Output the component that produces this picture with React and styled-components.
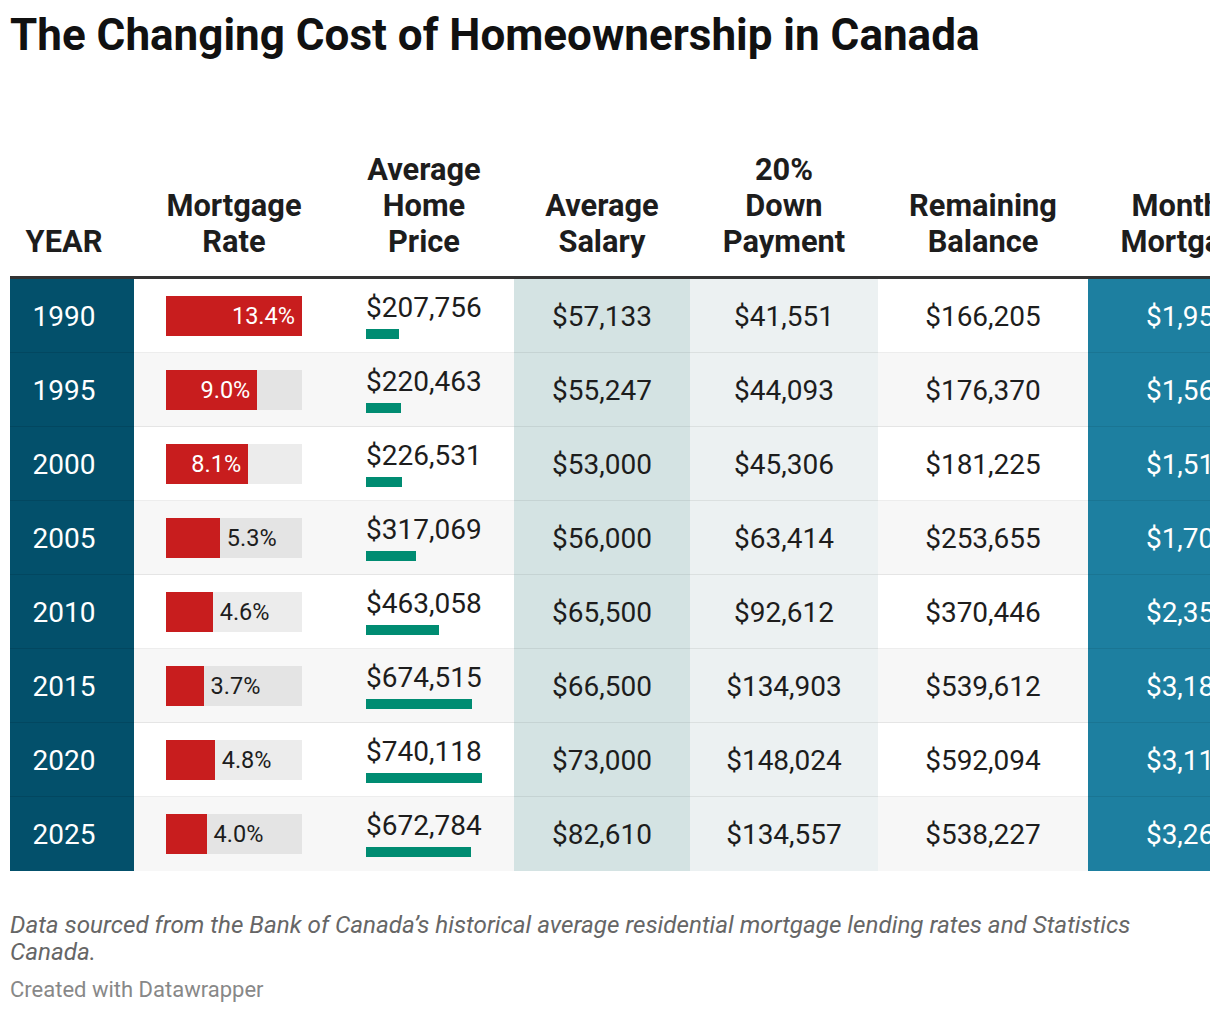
import React from "react"
import styled, { createGlobalStyle } from "styled-components"

const GlobalStyle = createGlobalStyle`
  html, body {
    margin: 0;
    padding: 0;
    background: #fff;
    overflow: hidden;
  }
  body {
    font-family: Roboto, "Liberation Sans", sans-serif;
    color: #1d1d1d;
  }
`

const MAX_RATE = 13.4
const MAX_PRICE = 740118

const rows = [
  { year: 1990, rate: 13.4, price: 207756, salary: "$57,133", down: "$41,551", balance: "$166,205", monthly: "$1,957" },
  { year: 1995, rate: 9.0, price: 220463, salary: "$55,247", down: "$44,093", balance: "$176,370", monthly: "$1,568" },
  { year: 2000, rate: 8.1, price: 226531, salary: "$53,000", down: "$45,306", balance: "$181,225", monthly: "$1,513" },
  { year: 2005, rate: 5.3, price: 317069, salary: "$56,000", down: "$63,414", balance: "$253,655", monthly: "$1,704" },
  { year: 2010, rate: 4.6, price: 463058, salary: "$65,500", down: "$92,612", balance: "$370,446", monthly: "$2,357" },
  { year: 2015, rate: 3.7, price: 674515, salary: "$66,500", down: "$134,903", balance: "$539,612", monthly: "$3,185" },
  { year: 2020, rate: 4.8, price: 740118, salary: "$73,000", down: "$148,024", balance: "$592,094", monthly: "$3,117" },
  { year: 2025, rate: 4.0, price: 672784, salary: "$82,610", down: "$134,557", balance: "$538,227", monthly: "$3,262" },
]

const columns = [
  { key: "year", label: ["YEAR"], width: 124, pad: 16 },
  { key: "rate", label: ["Mortgage", "Rate"], width: 200 },
  { key: "price", label: ["Average", "Home", "Price"], width: 180 },
  { key: "salary", label: ["Average", "Salary"], width: 176 },
  { key: "down", label: ["20%", "Down", "Payment"], width: 188 },
  { key: "balance", label: ["Remaining", "Balance"], width: 210 },
  { key: "monthly", label: ["Monthly", "Mortgage"], width: 200 },
]

const fmt = (n) => "$" + n.toLocaleString("en-US")

export default function App() {
  return (
    <Page>
      <GlobalStyle />
      <Title>The Changing Cost of Homeownership in Canada</Title>
      <TableWrap>
        <Table>
          <colgroup>
            {columns.map((c) => (
              <col key={c.key} style={{ width: c.width }} />
            ))}
          </colgroup>
          <thead>
            <tr>
              {columns.map((c) => (
                <HeadCell key={c.key} $padRight={c.pad}>
                  {c.label.map((l) => (
                    <div key={l}>{l}</div>
                  ))}
                </HeadCell>
              ))}
            </tr>
          </thead>
          <tbody>
            {rows.map((r, i) => {
              const striped = i % 2 === 1
              const rateW = (r.rate / MAX_RATE) * 136
              const inside = rateW > 75
              return (
                <Row key={r.year} $striped={striped}>
                  <YearCell>{r.year}</YearCell>
                  <Cell>
                    <RateTrack>
                      <RateBar style={{ width: rateW }}>
                        {inside && <RateLabel $inside>{r.rate.toFixed(1)}%</RateLabel>}
                      </RateBar>
                      {!inside && <RateLabel>{r.rate.toFixed(1)}%</RateLabel>}
                    </RateTrack>
                  </Cell>
                  <Cell>
                    <PriceBox>
                      <PriceText>{fmt(r.price)}</PriceText>
                      <PriceBar style={{ width: (r.price / MAX_PRICE) * 116 }} />
                    </PriceBox>
                  </Cell>
                  <Cell $bg="#d4e3e3" $line="rgba(0,0,0,0.07)">{r.salary}</Cell>
                  <Cell $bg="#ecf1f2">{r.down}</Cell>
                  <Cell>{r.balance}</Cell>
                  <Cell $bg="#1d7fa0" $color="#fff" $line="rgba(0,0,0,0.08)">{r.monthly}</Cell>
                </Row>
              )
            })}
          </tbody>
        </Table>
      </TableWrap>
      <Notes>
        Data sourced from the Bank of Canada’s historical average residential mortgage lending rates and Statistics Canada.
      </Notes>
      <Credit>Created with Datawrapper</Credit>
    </Page>
  )
}

const Page = styled.div`
  width: 1200px;
  padding: 9px 10px 0;
`

const Title = styled.h1`
  margin: 0;
  font-size: 44px;
  line-height: 53px;
  font-weight: 700;
  color: #111;
`

const TableWrap = styled.div`
  width: 1200px;
  overflow: hidden;
  margin-top: 90px;
`

const Table = styled.table`
  table-layout: fixed;
  border-collapse: collapse;
  width: 1278px;
`

const HeadCell = styled.th`
  vertical-align: bottom;
  text-align: center;
  font-size: 30.8px;
  line-height: 36px;
  font-weight: 700;
  color: #1d1d1d;
  padding: 0 ${(p) => p.$padRight || 0}px 16px 0;
  border-bottom: 3px solid #333;
`

const Row = styled.tr`
  height: 74px;
  background: ${(p) => (p.$striped ? "#f7f7f7" : "#fff")};
`

const Cell = styled.td`
  padding: 2px 0 0;
  text-align: center;
  font-size: 28px;
  height: 71px;
  background: ${(p) => p.$bg || "transparent"};
  color: ${(p) => p.$color || "#1d1d1d"};
  border-bottom: 1px solid ${(p) => p.$line || "rgba(0,0,0,0.07)"};
  tr:last-child & {
    border-bottom: none;
  }
`

const YearCell = styled(Cell)`
  background: #03506b;
  color: #fff;
  padding-right: 16px;
  border-bottom-color: rgba(0, 0, 0, 0.1);
`

const RateTrack = styled.div`
  display: flex;
  align-items: center;
  width: 136px;
  height: 40px;
  margin: -2px 0 0 32px;
  background: rgba(0, 0, 0, 0.075);
`

const RateBar = styled.div`
  height: 100%;
  background: #c81d1e;
  display: flex;
  align-items: center;
  justify-content: flex-end;
`

const RateLabel = styled.span`
  font-size: 23.5px;
  color: ${(p) => (p.$inside ? "#fff" : "#1d1d1d")};
  padding: ${(p) => (p.$inside ? "0 7px 0 0" : "0 0 0 7px")};
`

const PriceBox = styled.div`
  width: 116px;
  margin: -2px auto 0;
  display: flex;
  flex-direction: column;
  align-items: flex-start;
`

const PriceText = styled.div`
  line-height: 30px;
`

const PriceBar = styled.div`
  height: 10px;
  margin-top: 6px;
  background: #008c72;
`

const Notes = styled.p`
  margin: 41px 0 0;
  font-size: 24.2px;
  line-height: 27px;
  font-style: italic;
  color: #666;
`

const Credit = styled.div`
  margin-top: 12px;
  font-size: 22px;
  line-height: 24px;
  color: #888;
`
